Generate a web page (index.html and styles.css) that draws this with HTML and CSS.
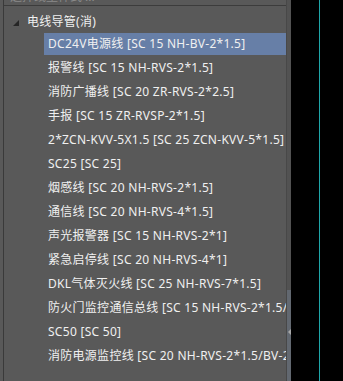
FILE: index.html
```html
<!DOCTYPE html>
<html lang="zh-CN">
<head>
  <meta charset="UTF-8">
  <title>电线导管</title>
  <link rel="stylesheet" href="styles.css">
</head>
<body>
  <div class="dock">
    <div class="tree">
      <div class="caption"><span>选择线型样式 ...</span></div>
      <ul class="list">
        <li class="group">
          <svg class="arrow" width="6" height="6" viewBox="0 0 6 6"><polygon points="6,0 6,6 0,6" fill="#262626"/></svg>
          <span>电线导管(消)</span>
        </li>
        <li class="item active">DC24V电源线 [SC 15 NH-BV-2*1.5]</li>
        <li class="item">报警线 [SC 15 NH-RVS-2*1.5]</li>
        <li class="item">消防广播线 [SC 20 ZR-RVS-2*2.5]</li>
        <li class="item">手报 [SC 15 ZR-RVSP-2*1.5]</li>
        <li class="item">2*ZCN-KVV-5X1.5 [SC 25 ZCN-KVV-5*1.5]</li>
        <li class="item">SC25 [SC 25]</li>
        <li class="item">烟感线 [SC 20 NH-RVS-2*1.5]</li>
        <li class="item">通信线 [SC 20 NH-RVS-4*1.5]</li>
        <li class="item">声光报警器 [SC 15 NH-RVS-2*1]</li>
        <li class="item">紧急启停线 [SC 20 NH-RVS-4*1]</li>
        <li class="item">DKL气体灭火线 [SC 25 NH-RVS-7*1.5]</li>
        <li class="item">防火门监控通信总线 [SC 15 NH-RVS-2*1.5/BV-2*2.5]</li>
        <li class="item">SC50 [SC 50]</li>
        <li class="item">消防电源监控线 [SC 20 NH-RVS-2*1.5/BV-2*2.5]</li>
      </ul>
    </div>
    <div class="splitter">
      <div class="thumb"><span class="grip"></span></div>
    </div>
  </div>
  <div class="canvas">
    <div class="guide"></div>
  </div>
</body>
</html>
```

FILE: styles.css
```css
* {margin: 0; padding: 0; box-sizing: border-box;}
html, body {height: 100%;}
body {
  display: flex;
  background: #000;
  font-family: "Noto Sans", "Noto Sans CJK SC", sans-serif;
  font-size: 12px;
  color: #f0f0f0;
  overflow: hidden;
}
li {list-style: none;}

.dock {
  display: flex;
  width: 291px;
  height: 100%;
  padding-left: 3px;
  background: #595959;
}
.tree {
  flex: 1;
  min-width: 0;
  border-left: 1px solid #3a3a3a;
  overflow: hidden;
}
.caption {
  height: 6px;
  display: flex;
  align-items: flex-end;
  overflow: hidden;
  border-bottom: 1px solid #3c3c3c;
  padding-left: 6px;
  color: #8a8a8a;
}
.caption span {
  line-height: 16px;
  white-space: nowrap;
}
.list {
  display: flex;
  flex-direction: column;
  gap: 2px;
  padding-top: 4px;
  letter-spacing: 0.28px;
}
.group {
  display: flex;
  align-items: center;
  height: 22px;
  margin-bottom: -1px;
  padding-left: 9px;
  gap: 8px;
  white-space: nowrap;
}
.arrow {margin-top: 3px;}
.item {
  height: 22px;
  line-height: 22px;
  margin-left: 40px;
  padding-left: 4px;
  white-space: nowrap;
  overflow: hidden;
}
.item.active {background: #677fa7;}

.splitter {
  width: 5px;
  border-left: 1px solid #484848;
  background: #525252;
  display: flex;
  flex-direction: column;
  justify-content: flex-end;
}
.thumb {
  height: 91px;
  background: #626870;
  display: flex;
  align-items: center;
  justify-content: center;
  padding-bottom: 8px;
}
.grip {
  width: 0;
  height: 0;
  border-top: 3px solid transparent;
  border-bottom: 3px solid transparent;
  border-right: 3px solid #a8a8a8;
}

.canvas {
  flex: 1;
  padding-left: 28px;
}
.guide {
  width: 1px;
  height: 100%;
  background: #1fa5a8;
}
```
